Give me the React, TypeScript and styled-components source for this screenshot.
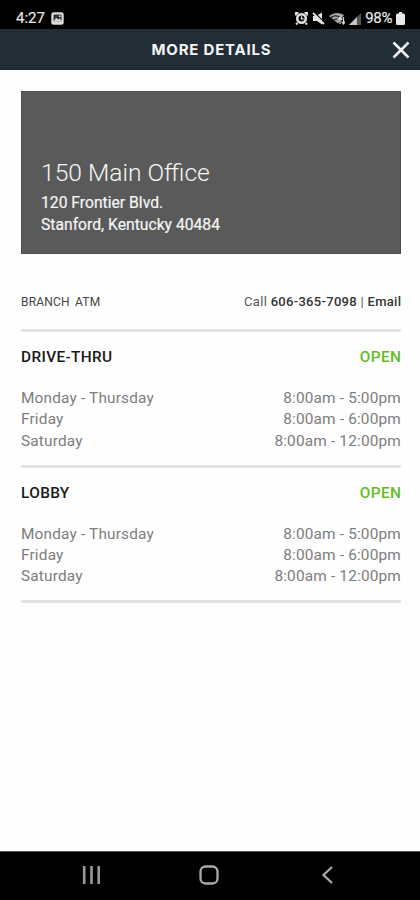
import React from 'react';
import styled, { createGlobalStyle } from 'styled-components';

const GlobalStyle = createGlobalStyle`
  * { box-sizing: border-box; }
  body { margin: 0; background: #fefefe; }
`;

const Screen = styled.div`
  display: flex;
  flex-direction: column;
  width: 420px;
  height: 900px;
  overflow: hidden;
  background: #fefefe;
  font-family: Roboto, sans-serif;
`;

const StatusBar = styled.div`
  display: flex;
  justify-content: space-between;
  height: 29px;
  flex: none;
  padding: 8px 15px 0 16px;
  background: #000;
  color: #e6e6e6;
  font-size: 15px;
  line-height: 21px;
`;

const StatusGroup = styled.div<{ $gap: number }>`
  display: flex;
  align-items: center;
  height: 21px;
  gap: ${(p) => p.$gap}px;
`;

const StatusText = styled.span<{ $spacing: number }>`
  letter-spacing: ${(p) => p.$spacing}px;
  -webkit-text-stroke: 0.2px currentColor;
`;

const Header = styled.header`
  display: grid;
  grid-template-columns: 40px 1fr 40px;
  align-items: center;
  flex: none;
  height: 41px;
  background: #222d36;
  border-bottom: 2px solid #182c3d;
`;

const HeaderTitle = styled.h1`
  grid-column: 2;
  margin: 2px 0 0 3px;
  text-align: center;
  white-space: nowrap;
  font: 700 15px/20px Inter, sans-serif;
  letter-spacing: 0.8px;
  color: #f4f5f6;
`;

const CloseButton = styled.button`
  display: flex;
  padding: 0;
  margin: 2px 0 0 12px;
  border: 0;
  background: none;
`;

const Content = styled.main`
  flex: 1;
  padding: 21px 19px 0 21px;
`;

const BranchCard = styled.section`
  height: 163px;
  padding: 65px 19px 0;
  border: 1px solid #505050;
  background: #5a5a5a;
  color: #f5f5f5;
`;

const BranchName = styled.h2`
  margin: 0;
  font-weight: 300;
  font-size: 24.6px;
  line-height: 32px;
  white-space: nowrap;
`;

const Address = styled.p`
  margin: 3px 0 0;
  font-size: 15.7px;
  line-height: 21.5px;
  white-space: nowrap;
  -webkit-text-stroke: 0.2px currentColor;
`;

const ContactRow = styled.div`
  display: flex;
  justify-content: space-between;
  align-items: center;
  height: 75px;
  padding-top: 20px;
  color: #555;
  line-height: 20px;
`;

const BranchType = styled.span`
  font-size: 12px;
  letter-spacing: 0.2px;
  word-spacing: 2px;
  color: #444;
`;

const Contact = styled.span`
  margin-right: -0.3px;
  font-size: 13px;
  letter-spacing: 0.3px;
  b { font-weight: 500; color: #333; }
`;

const HoursSection = styled.section`
  height: 135.5px;
  border-top: 3px solid #e4e4e4;
  padding-top: 15px;
`;

const SectionHead = styled.div`
  display: flex;
  justify-content: space-between;
  margin-bottom: 20px;
  font-size: 15.4px;
  font-weight: 500;
  line-height: 21px;
  letter-spacing: 0.35px;
`;

const SectionName = styled.h3`
  margin: 0;
  font: inherit;
  color: #181818;
`;

const OpenLabel = styled.span`
  margin-right: -0.3px;
  color: #61bd27;
`;

const HoursRow = styled.div`
  display: flex;
  justify-content: space-between;
  font-size: 15.4px;
  line-height: 21.3px;
  letter-spacing: 0.17px;
  color: #7d7d7d;
`;

const EndRule = styled.div`
  height: 3px;
  background: #e1e1e1;
`;

const NavBar = styled.nav`
  display: grid;
  grid-template-columns: 118px 122px 12px;
  align-items: center;
  flex: none;
  height: 49px;
  padding: 0 0 2px 81px;
  border-top: 1px solid #555;
  background: #000;
`;

const hours = [
  ['Monday - Thursday', '8:00am - 5:00pm'],
  ['Friday', '8:00am - 6:00pm'],
  ['Saturday', '8:00am - 12:00pm'],
];

const PhotoIcon = () => (
  <svg width="13" height="13" viewBox="0 0 13 13">
    <rect x=".3" y=".3" width="12.4" height="12.4" rx="2.5" fill="#ddd" />
    <rect x="2.500" y="2.500" width="8" height="7" rx="1" fill="#333" />
    <path d="M2.500 9.500 5.200 5.800l2 2 1.400-1.500 2.200 3.200z" fill="#ddd" />
    <circle cx="8.700" cy="4.200" r=".9" fill="#eee" />
  </svg>
);

const AlarmIcon = () => (
  <svg width="13" height="13" viewBox="0 0 13 13" fill="none" stroke="#e2e2e2">
    <path d="M1 3.500V1h2.500M12 3.500V1H9.500M2.500 11 1 12.500M10.500 11l1.500 1.500" strokeWidth="2" />
    <circle cx="6.500" cy="6.500" r="4.300" fill="#111" strokeWidth="2.500" />
    <path d="M6.500 4.300v2.500h2" strokeWidth="1.200" />
  </svg>
);

const MuteIcon = () => (
  <svg width="13" height="13" viewBox="0 0 13 13">
    <path d="M1 4h3l6-3.500v12L5 9H1z" fill="#e2e2e2" />
    <path d="m2 0 11 11" stroke="#000" strokeWidth="1.200" />
    <path d="m1 1 11 11" stroke="#e2e2e2" strokeWidth="1.800" />
  </svg>
);

const WifiIcon = () => (
  <svg width="16" height="13" viewBox="0 0 16 13" fill="none">
    <path d="M0 4Q7-1.500 15 3l-6 8.500z" fill="#a5a5a5" />
    <path d="M2 5.500q5-3.500 9 0M5 8q3-2 5 0" stroke="#151515" strokeWidth="1.100" />
    <path d="M11 12V6M8.800 8 11 5.500 13.200 8M14.500 5v7M12.500 9.500l2 2.500 1.500-2.500" stroke="#ddd" strokeWidth="1.200" />
  </svg>
);

const SignalIcon = () => (
  <svg width="12" height="12" viewBox="0 0 12 12">
    <path d="M0 12 12 0v12z" fill="#555" />
    <path d="M0 12 8 4v8z" fill="#c6c6c6" />
  </svg>
);

const BatteryIcon = () => (
  <svg width="9" height="13" viewBox="0 0 9 13">
    <path d="M3 0h3v1.500h1.500Q9 1.500 9 3v8.500q0 1.500-1.500 1.500h-6Q0 13 0 11.500V3q0-1.500 1.500-1.500H3z" fill="#e8e8e8" />
  </svg>
);

const CloseIcon = () => (
  <svg width="18" height="18" viewBox="0 0 18 18">
    <path d="m1.500 1.500 15 15m0-15-15 15" stroke="#f4f5f6" strokeWidth="2.500" />
  </svg>
);

const RecentsIcon = () => (
  <svg width="20" height="18" viewBox="0 0 20 18">
    <path d="M3.200 0v18M10.500 0v18M17.700 0v18" stroke="#999" strokeWidth="2.600" />
  </svg>
);

const HomeIcon = () => (
  <svg width="20" height="20" viewBox="0 0 20 20">
    <rect x="1.500" y="1.500" width="17" height="17" rx="5" fill="none" stroke="#aaa" strokeWidth="2.300" />
  </svg>
);

const BackIcon = () => (
  <svg width="12" height="18" viewBox="0 0 12 18">
    <path d="m11 1-8.500 8 8.500 8" fill="none" stroke="#aaa" strokeWidth="2.300" />
  </svg>
);

function Hours({ name }: { name: string }) {
  return (
    <HoursSection>
      <SectionHead>
        <SectionName>{name}</SectionName>
        <OpenLabel>OPEN</OpenLabel>
      </SectionHead>
      {hours.map(([day, time]) => (
        <HoursRow key={day}>
          <span>{day}</span>
          <span>{time}</span>
        </HoursRow>
      ))}
    </HoursSection>
  );
}

export default function App() {
  return (
    <Screen>
      <GlobalStyle />
      <StatusBar>
        <StatusGroup $gap={6}>
          <StatusText $spacing={0}>4:27</StatusText>
          <PhotoIcon />
        </StatusGroup>
        <StatusGroup $gap={4}>
          <AlarmIcon />
          <MuteIcon />
          <WifiIcon />
          <SignalIcon />
          <StatusText $spacing={-0.4}>98%</StatusText>
          <BatteryIcon />
        </StatusGroup>
      </StatusBar>
      <Header>
        <HeaderTitle>MORE DETAILS</HeaderTitle>
        <CloseButton aria-label="Close"><CloseIcon /></CloseButton>
      </Header>
      <Content>
        <BranchCard>
          <BranchName>150 Main Office</BranchName>
          <Address>120 Frontier Blvd.<br />Stanford, Kentucky 40484</Address>
        </BranchCard>
        <ContactRow>
          <BranchType>BRANCH ATM</BranchType>
          <Contact>Call <b>606-365-7098</b> | <b>Email</b></Contact>
        </ContactRow>
        <Hours name="DRIVE-THRU" />
        <Hours name="LOBBY" />
        <EndRule />
      </Content>
      <NavBar>
        <RecentsIcon />
        <HomeIcon />
        <BackIcon />
      </NavBar>
    </Screen>
  );
}
